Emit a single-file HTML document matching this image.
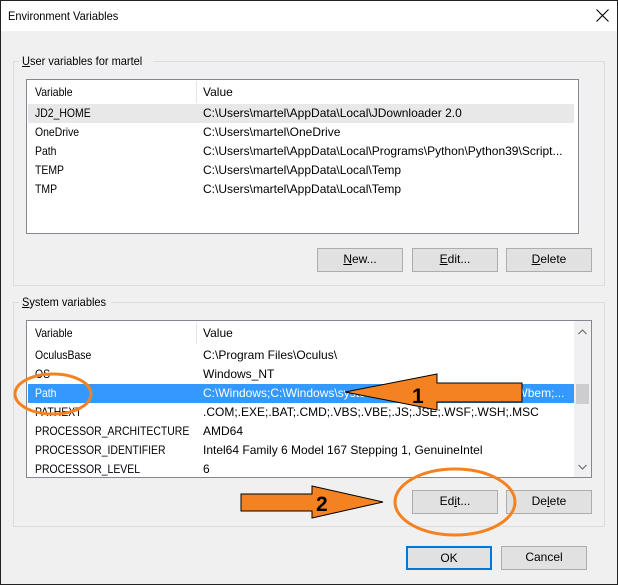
<!DOCTYPE html><html><head><style>
*{margin:0;padding:0;box-sizing:border-box}
body{width:618px;height:585px;background:#fff;font-family:"Liberation Sans",sans-serif;font-size:12px;color:#000;position:relative;overflow:hidden}
.a{position:absolute}
.win{left:0;top:0;width:618px;height:585px;border:1px solid #222;background:#f0f0f0}
.title{left:1px;top:1px;width:616px;height:30px;background:#fff}
.grp{border:1px solid #dcdcdc}
.lbl{background:#f0f0f0;padding:0 3px;white-space:nowrap}
.list{background:#fff;border:1px solid #828790}
.btn{background:#e1e1e1;border:1px solid #adadad;text-align:center;line-height:21px}
.row{position:absolute;left:1px;height:19px;line-height:19px;white-space:nowrap}
.row span{position:absolute}
.c1{left:7px;transform:scaleX(0.87);transform-origin:0 0}.c2{left:175px}
.sx{display:inline-block;transform:scaleX(0.92);transform-origin:0 0;white-space:nowrap}
</style></head><body>
<div class="a win"></div>
<div class="a title"></div>
<div class="a" style="left:8px;top:9px;white-space:nowrap"><span class="sx">Environment Variables</span></div>
<svg class="a" style="left:596px;top:9px" width="13" height="13"><path d="M0.5 0.5L12.5 12.5M12.5 0.5L0.5 12.5" stroke="#000" stroke-width="1.1"/></svg>

<div class="a grp" style="left:13px;top:61px;width:592px;height:225px"></div>
<div class="a lbl" style="left:19px;top:54px;width:134px"><span class="sx"><u>U</u>ser variables for martel</span></div>
<div class="a list" style="left:26px;top:79px;width:553px;height:155px">
 <div class="row" style="top:1px;width:545px;height:22px;line-height:22px"><span class="c1">Variable</span><span class="c2">Value</span></div>
 <div class="a" style="left:169px;top:1px;width:1px;height:22px;background:#e5e5e5"></div>
 <div class="row" style="top:24px;width:546px;background:#e8e8e8"><span class="c1">JD2_HOME</span><span class="c2">C:\Users\martel\AppData\Local\JDownloader 2.0</span></div>
 <div class="row" style="top:43px"><span class="c1">OneDrive</span><span class="c2">C:\Users\martel\OneDrive</span></div>
 <div class="row" style="top:62px;width:550px;overflow:hidden"><span class="c1">Path</span><span class="c2">C:\Users\martel\AppData\Local\Programs\Python\Python39\Script...</span></div>
 <div class="row" style="top:81px"><span class="c1">TEMP</span><span class="c2">C:\Users\martel\AppData\Local\Temp</span></div>
 <div class="row" style="top:100px"><span class="c1">TMP</span><span class="c2">C:\Users\martel\AppData\Local\Temp</span></div>
</div>
<div class="a btn" style="left:317px;top:248px;width:86px;height:24px"><u>N</u>ew...</div>
<div class="a btn" style="left:412px;top:248px;width:86px;height:24px"><u>E</u>dit...</div>
<div class="a btn" style="left:506px;top:248px;width:86px;height:24px"><u>D</u>elete</div>

<div class="a grp" style="left:13px;top:302px;width:592px;height:225px"></div>
<div class="a lbl" style="left:19px;top:295px;width:92px"><span class="sx"><u>S</u>ystem variables</span></div>
<div class="a list" style="left:26px;top:320px;width:566px;height:158px;overflow:hidden">
 <div class="row" style="top:1px;width:545px;height:22px;line-height:22px"><span class="c1">Variable</span><span class="c2">Value</span></div>
 <div class="a" style="left:169px;top:1px;width:1px;height:22px;background:#e5e5e5"></div>
 <div class="row" style="top:25px"><span class="c1">OculusBase</span><span class="c2">C:\Program Files\Oculus\</span></div>
 <div class="row" style="top:44px"><span class="c1">OS</span><span class="c2">Windows_NT</span></div>
 <div class="row" style="top:63px;width:546px;background:#3399ff;color:#fff;overflow:hidden"><span class="c1">Path</span><span class="c2">C:\Windows;C:\Windows\system32;C:\Windows\System32\Wbem;...</span></div>
 <div class="row" style="top:82px"><span class="c1">PATHEXT</span><span class="c2">.COM;.EXE;.BAT;.CMD;.VBS;.VBE;.JS;.JSE;.WSF;.WSH;.MSC</span></div>
 <div class="row" style="top:101px"><span class="c1">PROCESSOR_ARCHITECTURE</span><span class="c2">AMD64</span></div>
 <div class="row" style="top:120px"><span class="c1">PROCESSOR_IDENTIFIER</span><span class="c2">Intel64 Family 6 Model 167 Stepping 1, GenuineIntel</span></div>
 <div class="row" style="top:139px"><span class="c1">PROCESSOR_LEVEL</span><span class="c2">6</span></div>
 <div class="a" style="left:547px;top:0;width:17px;height:156px;background:#f0f0f0"></div>
 <div class="a" style="left:549px;top:63px;width:13px;height:20px;background:#cdcdcd"></div>
 <svg class="a" style="left:551px;top:8px" width="9" height="6"><path d="M0.5 5L4.5 1L8.5 5" fill="none" stroke="#606060"/></svg>
 <svg class="a" style="left:551px;top:143px" width="9" height="6"><path d="M0.5 1L4.5 5L8.5 1" fill="none" stroke="#606060"/></svg>
</div>
<div class="a btn" style="left:412px;top:490px;width:86px;height:24px">Ed<u>i</u>t...</div>
<div class="a btn" style="left:506px;top:490px;width:86px;height:24px">De<u>l</u>ete</div>

<div class="a btn" style="left:406px;top:546px;width:86px;height:24px;border:2px solid #0078d7;line-height:20px">OK</div>
<div class="a btn" style="left:501px;top:546px;width:86px;height:24px">Cancel</div>

<svg class="a" style="left:0;top:0" width="618" height="585">
 <ellipse cx="53" cy="394" rx="38" ry="20" fill="none" stroke="#f58220" stroke-width="3"/>
 <ellipse cx="455" cy="502" rx="60" ry="33" fill="none" stroke="#f58220" stroke-width="3"/>
 <polygon points="345,392 437,374 437,383 522,383 522,402 437,402 437,410" fill="#f58220" stroke="#000"/>
 <text x="412" y="403" font-family="Liberation Sans" font-weight="bold" font-size="21">1</text>
 <polygon points="241,494 312,494 312,486 383,502 312,518 312,511 241,511" fill="#f58220" stroke="#000"/>
 <text x="316" y="511" font-family="Liberation Sans" font-weight="bold" font-size="21">2</text>
</svg>
</body></html>
